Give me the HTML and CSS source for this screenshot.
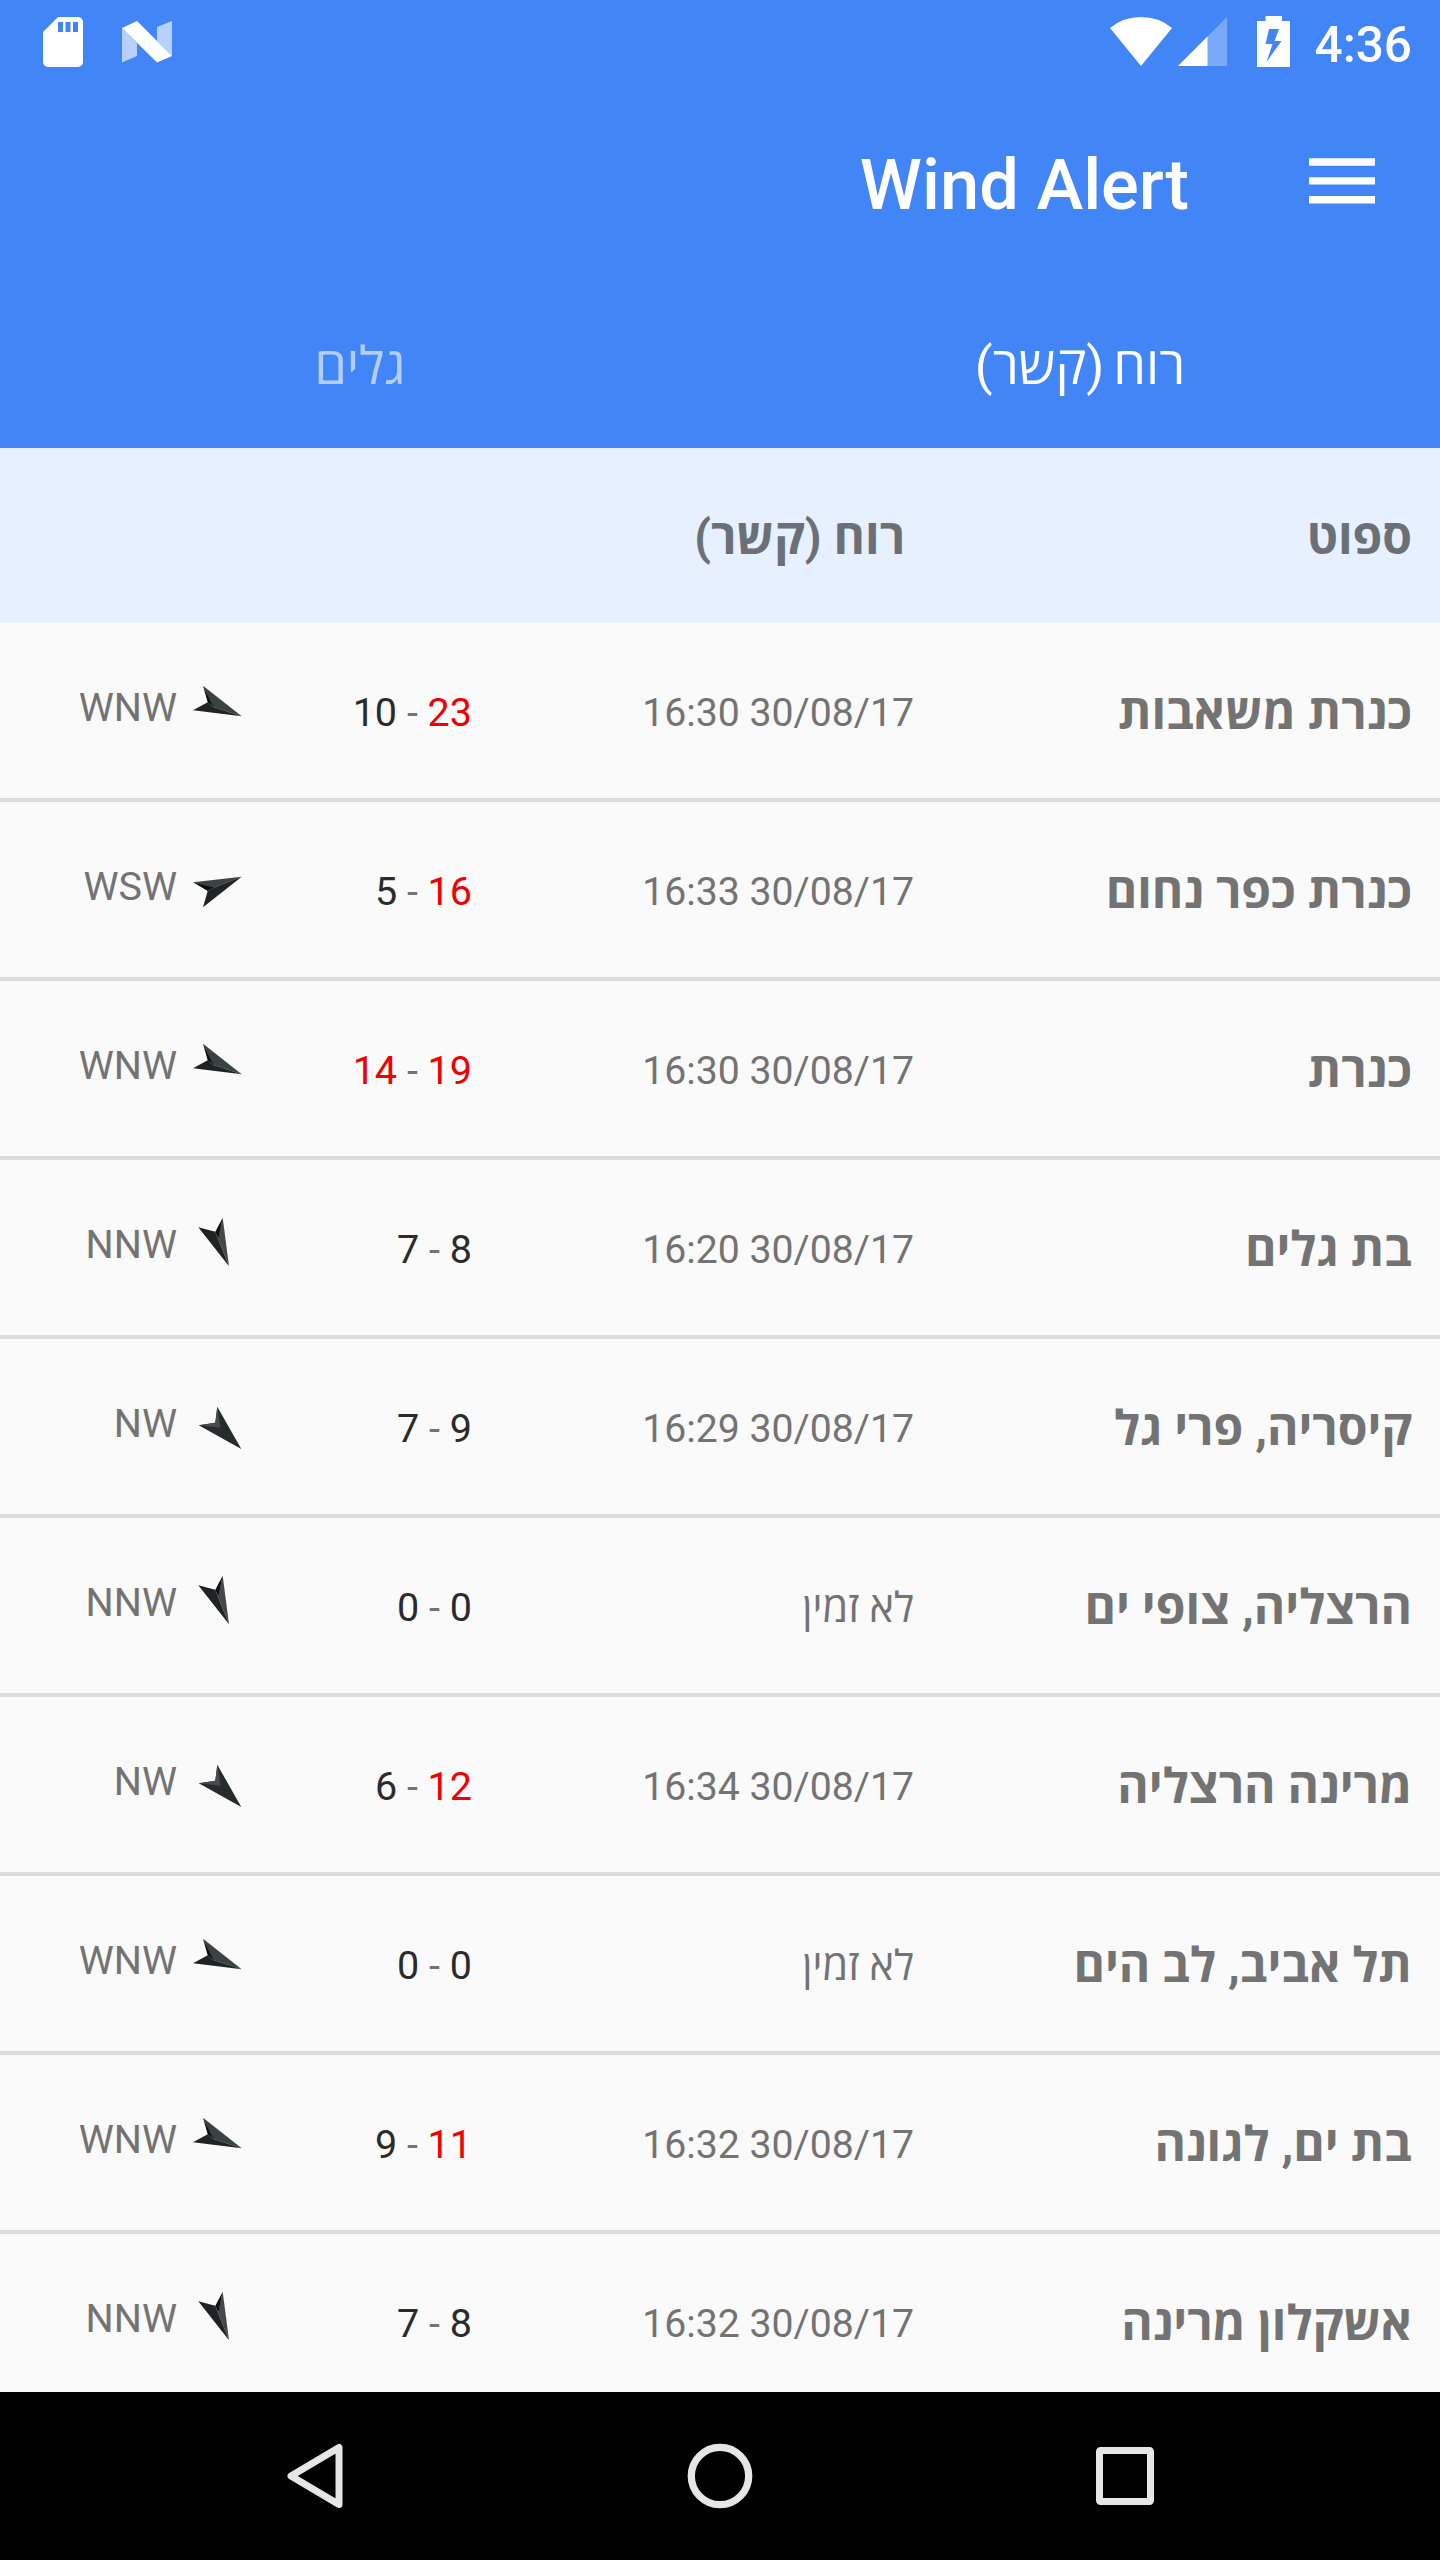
FILE: index.html
```html
<!DOCTYPE html>
<html lang="he" dir="rtl">
<head>
  <meta charset="UTF-8">
  <meta name="viewport" content="width=device-width, initial-scale=1.0">
  <title>Wind Alert</title>
  <link rel="stylesheet" href="styles.css">
</head>
<body>
  <!-- wind arrows, one per direction -->
  <svg class="hidden">
    <symbol id="wnw" viewBox="0 0 56 64">
      <path fill="#3b4242" d="M13 12.7 23.3 34 51.7 43.3z"/>
      <path fill="#1f2323" d="M3 37.3 17.7 29.3 23.3 34 51.7 43.3z"/>
      <path fill="#0c0f0f" d="M13 12.7 17.7 29.3 24 34.5z"/>
    </symbol>
    <symbol id="wsw" viewBox="0 0 56 64">
      <path fill="#3b4242" d="M3 30.3 51.7 24.7 23 36z"/>
      <path fill="#1f2323" d="M13 55.3 17.7 39 23 36 51.7 24.7z"/>
      <path fill="#0c0f0f" d="M3 30.3 17.7 39 24 35.6z"/>
    </symbol>
    <symbol id="nnw" viewBox="0 0 56 64">
      <path fill="#43494b" d="M32.7 7.7 39 56.3 28 28.7z"/>
      <path fill="#1f2323" d="M8.3 17.3 25.3 21.7 28 28.7 39 56.3z"/>
      <path fill="#0c0f0f" d="M32.7 7.7 25.3 21.7 28.3 29z"/>
    </symbol>
    <symbol id="nw" viewBox="0 0 56 64">
      <path fill="#262b2b" d="M27.3 17.7 51.3 60 8.7 36.3 25.3 33.7z"/>
      <path fill="#474b4c" d="M27.3 17.7 25.3 33.7 8.7 36.3 30.5 38.8z"/>
    </symbol>
  </svg>

  <header>
    <div class="status-bar">
      <svg class="sd" width="40" height="50" viewBox="0 0 40 50"><path fill="#fff" fill-rule="evenodd" d="M15 0H35a5 5 0 0 1 5 5V45a5 5 0 0 1-5 5H5a5 5 0 0 1-5-5V15zM15 5V15H20V5zM22.5 5V15H27.500V5zM30 5V15H35V5z"/></svg>
      <svg class="nougat" width="50" height="42" viewBox="0 0 50 42">
        <path fill="#fff" fill-opacity=".62" d="M0 7 15 22V35L0 41.500zM50 0V35L35 20V6z"/>
        <path fill="#fff" d="M0 7 15 0 50 35 35 41.500z"/>
      </svg>
      <svg class="wifi" width="62" height="49" viewBox="0 0 62 49"><path fill="#fff" d="M31 49 0 11Q13 0 31 0T62 11z"/></svg>
      <svg class="signal" width="49" height="49" viewBox="0 0 49 49">
        <path fill="#fff" fill-opacity=".3" d="M49 0V49H0z"/>
        <path fill="#fff" d="M29.500 19.500V49H0z"/>
      </svg>
      <svg class="battery" width="33" height="51" viewBox="0 0 33 51"><path fill="#fff" fill-rule="evenodd" d="M8.500 0H25V5H33V51H0V5H8.500zM12 13 8.500 28H15.500L9.500 46 24.500 25H17.500L22 13z"/></svg>
      <span class="clock">4:36</span>
    </div>
    <div class="toolbar">
      <svg class="menu" width="66" height="46" viewBox="0 0 66 46"><path fill="#fff" d="M0 .3H66V7.700H0zM0 19.200H66V26.600H0zM0 38.100H66V45.500H0z"/></svg>
      <h1>Wind Alert</h1>
    </div>
    <nav class="tabs">
      <a class="tab active">רוח (קשר)</a>
      <a class="tab">גלים</a>
    </nav>
  </header>

  <div class="table-head">
    <span class="spot">ספוט</span>
    <span class="wind">רוח (קשר)</span>
  </div>

  <main class="spots">
    <div class="row">
      <span class="spot">כנרת משאבות</span>
      <span class="date" dir="ltr">16:30 30/08/17</span>
      <span class="range" dir="ltr"><b>10</b> - <b class="strong">23</b></span>
      <span class="dir" dir="ltr">WNW <svg><use href="#wnw"/></svg></span>
    </div>
    <div class="row">
      <span class="spot">כנרת כפר נחום</span>
      <span class="date" dir="ltr">16:33 30/08/17</span>
      <span class="range" dir="ltr"><b>5</b> - <b class="strong">16</b></span>
      <span class="dir" dir="ltr">WSW <svg><use href="#wsw"/></svg></span>
    </div>
    <div class="row">
      <span class="spot">כנרת</span>
      <span class="date" dir="ltr">16:30 30/08/17</span>
      <span class="range" dir="ltr"><b class="strong">14</b> - <b class="strong">19</b></span>
      <span class="dir" dir="ltr">WNW <svg><use href="#wnw"/></svg></span>
    </div>
    <div class="row">
      <span class="spot">בת גלים</span>
      <span class="date" dir="ltr">16:20 30/08/17</span>
      <span class="range" dir="ltr"><b>7</b> - <b>8</b></span>
      <span class="dir" dir="ltr">NNW <svg><use href="#nnw"/></svg></span>
    </div>
    <div class="row">
      <span class="spot">קיסריה, פרי גל</span>
      <span class="date" dir="ltr">16:29 30/08/17</span>
      <span class="range" dir="ltr"><b>7</b> - <b>9</b></span>
      <span class="dir" dir="ltr">NW <svg><use href="#nw"/></svg></span>
    </div>
    <div class="row">
      <span class="spot">הרצליה, צופי ים</span>
      <span class="date none">לא זמין</span>
      <span class="range" dir="ltr"><b>0</b> - <b>0</b></span>
      <span class="dir" dir="ltr">NNW <svg><use href="#nnw"/></svg></span>
    </div>
    <div class="row">
      <span class="spot">מרינה הרצליה</span>
      <span class="date" dir="ltr">16:34 30/08/17</span>
      <span class="range" dir="ltr"><b>6</b> - <b class="strong">12</b></span>
      <span class="dir" dir="ltr">NW <svg><use href="#nw"/></svg></span>
    </div>
    <div class="row">
      <span class="spot">תל אביב, לב הים</span>
      <span class="date none">לא זמין</span>
      <span class="range" dir="ltr"><b>0</b> - <b>0</b></span>
      <span class="dir" dir="ltr">WNW <svg><use href="#wnw"/></svg></span>
    </div>
    <div class="row">
      <span class="spot">בת ים, לגונה</span>
      <span class="date" dir="ltr">16:32 30/08/17</span>
      <span class="range" dir="ltr"><b>9</b> - <b class="strong">11</b></span>
      <span class="dir" dir="ltr">WNW <svg><use href="#wnw"/></svg></span>
    </div>
    <div class="row">
      <span class="spot">אשקלון מרינה</span>
      <span class="date" dir="ltr">16:32 30/08/17</span>
      <span class="range" dir="ltr"><b>7</b> - <b>8</b></span>
      <span class="dir" dir="ltr">NNW <svg><use href="#nnw"/></svg></span>
    </div>
  </main>

  <footer class="nav-bar">
    <svg width="66" height="66" viewBox="0 0 66 66"><path fill="none" stroke="#e6e6e6" stroke-width="7" stroke-linejoin="round" d="M57 4.500V61.500L9 33z"/></svg>
    <svg width="66" height="66" viewBox="0 0 66 66"><circle cx="33" cy="33" r="28.700" fill="none" stroke="#e6e6e6" stroke-width="7.300"/></svg>
    <svg width="66" height="66" viewBox="0 0 66 66"><rect x="7.500" y="7.500" width="51" height="51" rx="1" fill="none" stroke="#e6e6e6" stroke-width="7" stroke-linejoin="round"/></svg>
  </footer>
</body>
</html>
```
FILE: styles.css
```css
body {
  font-family: Roboto, 'Open Sans', sans-serif;
  margin: 0;
  width: 1440px;
  height: 2560px;
  display: flex;
  flex-direction: column;
  overflow: hidden;
  background-color: #fafafa;
  color: #737373;
}

.hidden {
  display: none;
}

header {
  height: 448px;
  flex-shrink: 0;
  background-color: #4285f6;
  color: #fff;
}

.status-bar {
  direction: ltr;
  display: flex;
  align-items: flex-start;
  height: 84px;
  padding: 0 28px 0 43px;
  box-sizing: border-box;
}

.sd {
  margin-top: 17px;
}

.nougat {
  margin: 21px auto 0 39px;
}

.wifi {
  margin-top: 17px;
}

.signal {
  margin: 17px 30px 0 6px;
}

.battery {
  margin-top: 16px;
}

.clock {
  margin-left: 25px;
  margin-top: 15px;
  font-size: 49.5px;
  line-height: 60px;
  font-weight: 500;
}

.toolbar {
  display: flex;
  align-items: center;
  height: 196px;
  padding-right: 65px;
}

.menu {
  margin-bottom: 3px;
}

h1 {
  margin: 5px 120px 0 0;
  font-size: 70.5px;
  line-height: 82px;
  font-weight: 500;
}

.tabs {
  display: flex;
  height: 168px;
}

.tab {
  flex: 1;
  text-align: center;
  font-size: 52px;
  line-height: 174px;
  word-spacing: -4px;
  color: rgba(255, 255, 255, 0.6);
}

.tab.active {
  color: #fff;
}

.table-head,
.row {
  display: grid;
  grid-template-columns: 498px 442px 226px 246px;
  align-items: center;
  flex-shrink: 0;
  box-sizing: border-box;
  padding-right: 28px;
}

.table-head {
  height: 175px;
  background-color: #e6f0ff;
  color: #6b6f76;
}

.spot,
.table-head .wind {
  font-size: 48px;
  font-weight: bold;
}

.table-head .wind {
  padding-right: 9px;
}

.spots {
  flex: 1;
  overflow: hidden;
}

.row {
  height: 179px;
  border-bottom: 4px solid #dcdcdc;
}

.date,
.range {
  font-size: 39.5px;
  text-align: right;
  margin-top: 3px;
}

.date {
  font-size: 39.2px;
  margin-top: 4px;
}

.date.none {
  font-size: 41.5px;
  margin-top: 0;
}

.range b {
  font-weight: normal;
  color: #2b2b2b;
}

.range .strong {
  color: #f00000;
}

.dir {
  display: flex;
  align-items: center;
  justify-content: flex-end;
  gap: 13px;
  font-size: 39.5px;
  margin-bottom: 7px;
}

.dir svg {
  width: 56px;
  height: 64px;
  margin-bottom: 4px;
}

.nav-bar {
  direction: ltr;
  display: flex;
  justify-content: center;
  align-items: center;
  gap: 339px;
  height: 168px;
  flex-shrink: 0;
  background-color: #000;
}
```
